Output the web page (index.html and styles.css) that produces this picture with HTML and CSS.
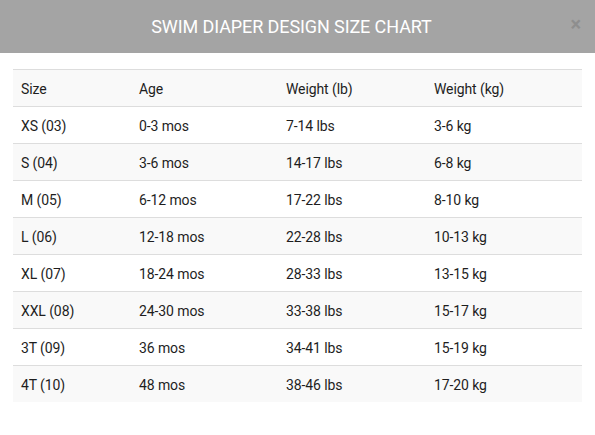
FILE: index.html
```html
<!DOCTYPE html>
<html>
<head>
<meta charset="utf-8">
<link rel="stylesheet" href="styles.css">
</head>
<body>
<div class="modal">
  <div class="modal-header">
    <h1 class="title">SWIM DIAPER DESIGN SIZE CHART</h1>
    <span class="close">×</span>
  </div>
  <div class="modal-body">
    <table class="chart">
      <colgroup>
        <col class="c1"><col class="c2"><col class="c3"><col class="c4">
      </colgroup>
      <tbody>
        <tr><td>Size</td><td>Age</td><td>Weight (lb)</td><td>Weight (kg)</td></tr>
        <tr><td>XS (03)</td><td>0-3 mos</td><td>7-14 lbs</td><td>3-6 kg</td></tr>
        <tr><td>S (04)</td><td>3-6 mos</td><td>14-17 lbs</td><td>6-8 kg</td></tr>
        <tr><td>M (05)</td><td>6-12 mos</td><td>17-22 lbs</td><td>8-10 kg</td></tr>
        <tr><td>L (06)</td><td>12-18 mos</td><td>22-28 lbs</td><td>10-13 kg</td></tr>
        <tr><td>XL (07)</td><td>18-24 mos</td><td>28-33 lbs</td><td>13-15 kg</td></tr>
        <tr><td>XXL (08)</td><td>24-30 mos</td><td>33-38 lbs</td><td>15-17 kg</td></tr>
        <tr><td>3T (09)</td><td>36 mos</td><td>34-41 lbs</td><td>15-19 kg</td></tr>
        <tr><td>4T (10)</td><td>48 mos</td><td>38-46 lbs</td><td>17-20 kg</td></tr>
      </tbody>
    </table>
  </div>
</div>
</body>
</html>
```

FILE: styles.css
```css
html, body {
  margin: 0;
  padding: 0;
  background: #ffffff;
}
body {
  font-family: Roboto, "DejaVu Sans", sans-serif;
  color: #222;
}
.modal {
  width: 595px;
}
.modal-header {
  position: relative;
  height: 53px;
  background: #a4a4a4;
  display: flex;
  align-items: center;
  justify-content: center;
}
.title {
  margin: 0;
  font-size: 18px;
  font-weight: 400;
  color: #ffffff;
  letter-spacing: -0.1px;
  padding-right: 12px;
}
.close {
  position: absolute;
  right: 14px;
  top: 14px;
  font-size: 20px;
  line-height: 20px;
  color: #8e8e8e;
  font-weight: 700;
}
.modal-body {
  padding: 16px 13px 0 13px;
}
.chart {
  width: 569px;
  border-collapse: collapse;
  font-size: 14px;
}
.c1 { width: 118px; }
.c2 { width: 147px; }
.c3 { width: 148px; }
.c4 { width: 156px; }
.chart td {
  height: 35px;
  padding: 1px 8px 0 8px;
  border-top: 1px solid #dddddd;
  vertical-align: middle;
  color: #1e1e1e;
  letter-spacing: -0.1px;
}
.chart tr:nth-child(odd) td {
  background: #f9f9f9;
}
```
